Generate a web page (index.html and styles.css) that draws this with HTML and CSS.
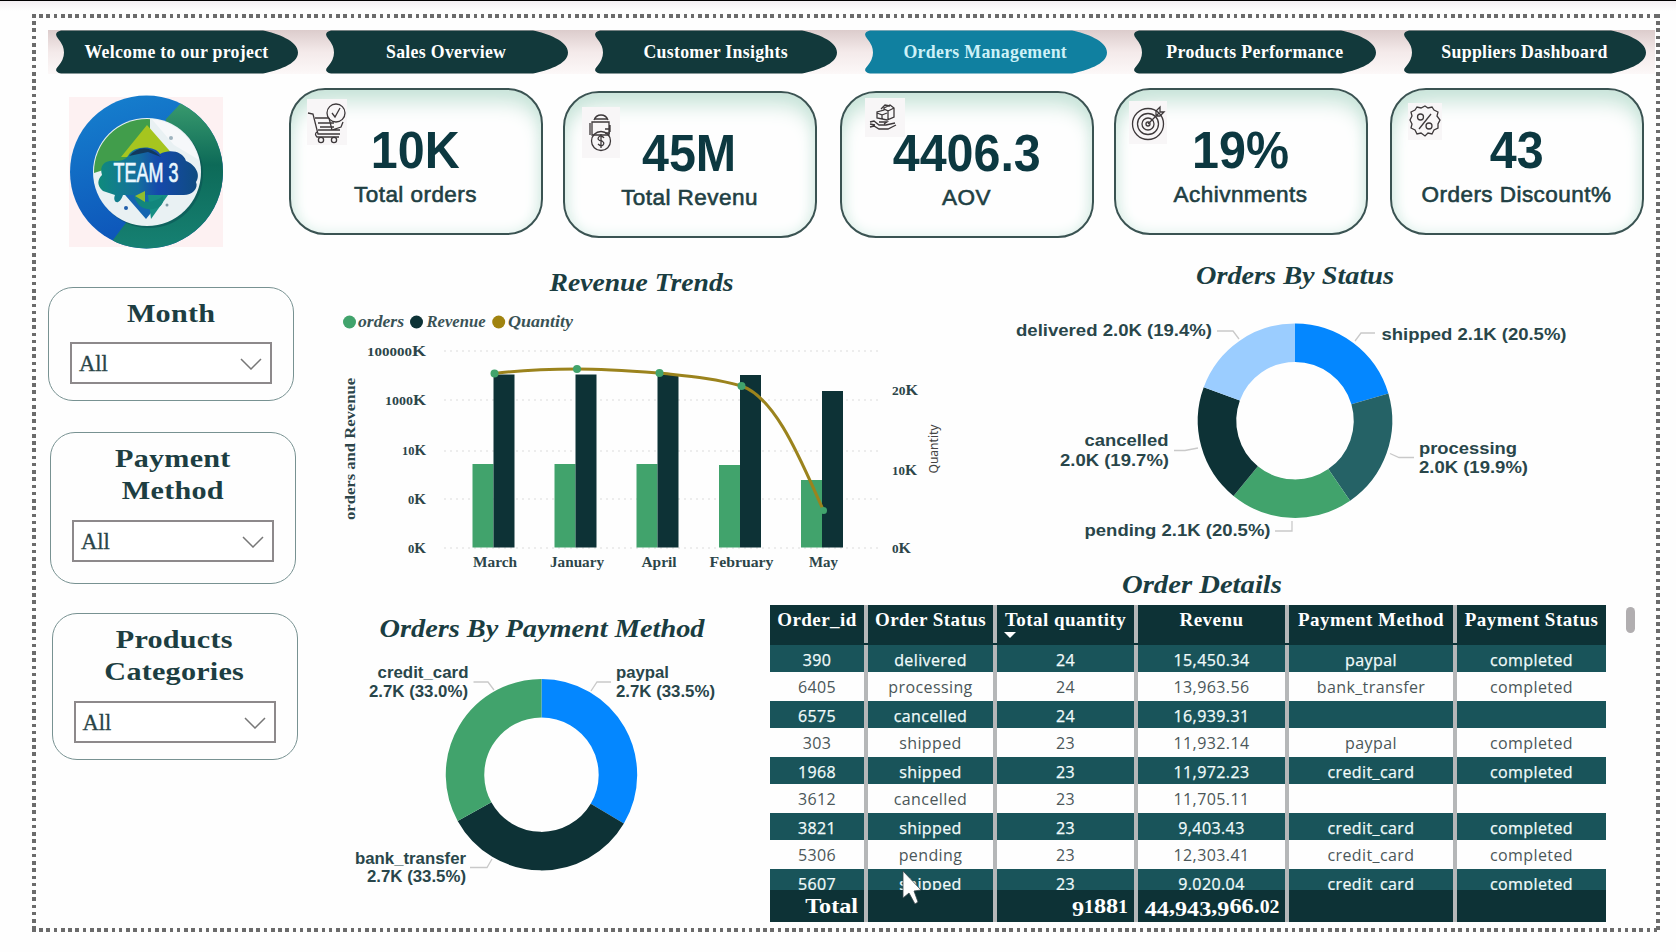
FILE: index.html
```html
<!DOCTYPE html>
<html lang="en">
<head>
<meta charset="utf-8">
<title>Orders Management</title>
<link rel="stylesheet" href="styles.css">
</head>
<body>
<div class="page">
  <nav class="nav">
    <a class="tab"><svg class="tab-shape" viewBox="0 0 242 43"><path d="M5 0H207C221 3 242 10 242 22S221 40 207 43H5Q-3 41 2 36Q14 22 2 8Q-3 2 5 0Z"/></svg><span>Welcome to our project</span></a>
    <a class="tab"><svg class="tab-shape" viewBox="0 0 242 43"><path d="M5 0H207C221 3 242 10 242 22S221 40 207 43H5Q-3 41 2 36Q14 22 2 8Q-3 2 5 0Z"/></svg><span>Sales Overview</span></a>
    <a class="tab"><svg class="tab-shape" viewBox="0 0 242 43"><path d="M5 0H207C221 3 242 10 242 22S221 40 207 43H5Q-3 41 2 36Q14 22 2 8Q-3 2 5 0Z"/></svg><span>Customer Insights</span></a>
    <a class="tab active"><svg class="tab-shape" viewBox="0 0 242 43"><path d="M5 0H207C221 3 242 10 242 22S221 40 207 43H5Q-3 41 2 36Q14 22 2 8Q-3 2 5 0Z"/></svg><span>Orders Management</span></a>
    <a class="tab"><svg class="tab-shape" viewBox="0 0 242 43"><path d="M5 0H207C221 3 242 10 242 22S221 40 207 43H5Q-3 41 2 36Q14 22 2 8Q-3 2 5 0Z"/></svg><span>Products Performance</span></a>
    <a class="tab"><svg class="tab-shape" viewBox="0 0 242 43"><path d="M5 0H207C221 3 242 10 242 22S221 40 207 43H5Q-3 41 2 36Q14 22 2 8Q-3 2 5 0Z"/></svg><span>Suppliers Dashboard</span></a>
  </nav>

  <header class="summary">
    <svg class="logo" viewBox="0 0 155 155">
      <defs>
        <linearGradient id="lb" x1="0" y1="0" x2="0.3" y2="1"><stop offset="0" stop-color="#1682cf"/><stop offset="1" stop-color="#0d53b8"/></linearGradient>
        <linearGradient id="lg" x1="0.5" y1="0" x2="0.5" y2="1"><stop offset="0" stop-color="#3ea070"/><stop offset="0.45" stop-color="#0d6a58"/><stop offset="1" stop-color="#168173"/></linearGradient>
        <linearGradient id="lt" x1="0" y1="0" x2="1" y2="0"><stop offset="0" stop-color="#0f8a7c"/><stop offset="0.4" stop-color="#146f9e"/><stop offset="0.6" stop-color="#1549ac"/><stop offset="1" stop-color="#0f4c80"/></linearGradient>
        <clipPath id="lc"><circle cx="77.500" cy="77" r="76.500"/></clipPath>
        <clipPath id="li"><ellipse cx="78" cy="77" rx="53" ry="53"/></clipPath>
      </defs>
      <rect y="2" width="154" height="150" fill="#fdf1f2"/>
      <g clip-path="url(#lc)"><rect width="155" height="155" fill="url(#lb)"/><path d="M112 8L97 24V80L56 129L44 145V155H155V0Z" fill="url(#lg)"/></g>
      <ellipse cx="80" cy="79" rx="54" ry="54" fill="#0a4b52" opacity=".5"/>
      <ellipse cx="78" cy="77" rx="54" ry="54" fill="#e9f1f3"/>
      <g clip-path="url(#li)"><path d="M20 20H81V60L25 78Z" fill="#419d4b"/><path d="M78 30L52 62H106Z" fill="#a6c51f"/><path d="M81 22L105 50L132 66V20Z" fill="#f6f8fa"/><path d="M50 93H102L77 124Z" fill="#1565b0"/><path d="M78 93H104L82 124Z" fill="#168f83"/></g>
      <path d="M34 96C27 90 29 84 33 80C30 70 36 65 46 66C52 66 56 65 59 61C64 50 86 50 91 59C100 54 114 56 117 66C127 70 132 80 127 87C130 94 122 101 113 100H54C50 112 43 107 46 100Z" fill="url(#lt)"/>
      <path d="M60 61Q75 45 92 62L79 57Z" fill="#12395c"/>
      <path d="M65 100Q78 113 94 101Q96 112 84 114Q69 116 65 100Z" fill="#12867c"/><path d="M66 101L76 96V107Z" fill="#8fbd2e"/>
      <circle cx="57" cy="113" r="2" fill="#225fac"/><circle cx="102" cy="43" r="2" fill="#9fb4be"/><circle cx="98" cy="110" r="1.500" fill="#7c9aa4"/>
      <text class="logo-text" x="77" y="87" text-anchor="middle" textLength="65" lengthAdjust="spacingAndGlyphs">TEAM 3</text>
    </svg>
    <section class="card">
      <svg class="icon cart" viewBox="0 0 40 46"><path d="M1 14L6 15L11 35H33M8 19H22M11 24H27M13 28H27M22 19L25 31L34 28L36 23M10 33Q7 35 10 38H32M11 31H33"/><circle cx="14" cy="41" r="2.600"/><circle cx="27" cy="41" r="2.600"/><circle cx="29" cy="14" r="9"/><path d="M25 14L28 18L33 9"/></svg>
      <strong>10K</strong><span>Total orders</span>
    </section>
    <section class="card low">
      <svg class="icon bag" viewBox="0 0 38 51"><path d="M12 13Q14 8 19 8T26 13M10 15H27V28H10ZM8 16V28M12 12H25M28 18V25M23 22H28M23 26H28"/><circle cx="19" cy="34" r="9.500"/><path d="M22 31Q21 29 18 29Q16 30 16 32Q17 34 20 34Q23 36 21 38Q19 40 16 37M19 27V41"/></svg>
      <strong>45M</strong><span>Total Revenu</span>
    </section>
    <section class="card low aov">
      <svg class="icon boxes" viewBox="0 0 40 39"><path d="M19 10L25 7L29 10V19L22 22L12 20V14L19 12ZM19 11L23 13V21M23 13L29 10M12 15L17 17V21M17 17L22 15M16 11L20 7L25 8M5 24L9 23L14 27H21L30 25M5 29L9 28L14 31H23L31 27M5 26L10 27M14 24H22L19 26"/></svg>
      <strong>4406.3</strong><span>AOV</span>
    </section>
    <section class="card">
      <svg class="icon target" viewBox="0 0 38 43"><circle cx="19" cy="23" r="15.500"/><circle cx="19" cy="23" r="10.500"/><circle cx="19" cy="23" r="6"/><circle cx="19" cy="23" r="2"/><path d="M19 23L30 12M27 15V10L31 6V11H35L31 15Z"/></svg>
      <strong>19%</strong><span>Achivnments</span>
    </section>
    <section class="card">
      <svg class="icon percent" viewBox="0 0 34 37"><path d="M17 3L20 5L24 4L26 7L30 9L29 13L32 17L30 21L30 25L26 27L24 31L20 30L17 33L13 30L9 31L7 27L3 25L4 21L2 17L4 13L3 9L7 7L9 4L13 5Z"/><circle cx="12.500" cy="14" r="3"/><circle cx="21" cy="23" r="3"/><path d="M23 11L11 26"/></svg>
      <strong>43</strong><span>Orders Discount%</span>
    </section>
  </header>

  <main class="content">
    <aside class="filters">
      <section class="filter month">
        <h2>Month</h2>
        <div class="select"><span>All</span><svg viewBox="0 0 22 12"><path d="M1 1L11 11L21 1"/></svg></div>
      </section>
      <section class="filter payment">
        <h2>Payment<br>Method</h2>
        <div class="select"><span>All</span><svg viewBox="0 0 22 12"><path d="M1 1L11 11L21 1"/></svg></div>
      </section>
      <section class="filter products">
        <h2>Products<br>Categories</h2>
        <div class="select"><span>All</span><svg viewBox="0 0 22 12"><path d="M1 1L11 11L21 1"/></svg></div>
      </section>
    </aside>

    <div class="visuals">
      <div class="row">
        <svg class="chart" width="630" height="322" viewBox="330 250 630 322">
          <text class="title" x="549.500" y="291" textLength="184" lengthAdjust="spacingAndGlyphs">Revenue Trends</text>
          <circle cx="349.500" cy="322" r="6.500" fill="#41a36c"/><text class="legend" x="358" y="327" textLength="46" lengthAdjust="spacingAndGlyphs">orders</text>
          <circle cx="416.500" cy="322" r="6.500" fill="#0d3236"/><text class="legend" x="426.500" y="327" textLength="59" lengthAdjust="spacingAndGlyphs">Revenue</text>
          <circle cx="498.700" cy="322" r="6.500" fill="#a0830f"/><text class="legend" x="508" y="327" textLength="65" lengthAdjust="spacingAndGlyphs">Quantity</text>
          <path class="grid" d="M444 351H878M444 400H878M444 451H878M444 499H878M444 548H878"/>
          <g class="axis">
            <text x="367" y="355.500" textLength="59" lengthAdjust="spacingAndGlyphs"><tspan class="small">100000</tspan>K</text>
            <text x="385" y="404.500" textLength="41" lengthAdjust="spacingAndGlyphs"><tspan class="small">1000</tspan>K</text>
            <text x="402" y="454.500" textLength="24" lengthAdjust="spacingAndGlyphs"><tspan class="small">10</tspan>K</text>
            <text x="408" y="503.500" textLength="18" lengthAdjust="spacingAndGlyphs"><tspan class="small">0</tspan>K</text>
            <text x="408" y="552.500" textLength="18" lengthAdjust="spacingAndGlyphs"><tspan class="small">0</tspan>K</text>
            <text x="892" y="395" textLength="26" lengthAdjust="spacingAndGlyphs"><tspan class="small">20</tspan>K</text>
            <text x="892" y="474.500" textLength="25" lengthAdjust="spacingAndGlyphs"><tspan class="small">10</tspan>K</text>
            <text x="892" y="552.500" textLength="19" lengthAdjust="spacingAndGlyphs"><tspan class="small">0</tspan>K</text>
            <text x="473" y="567" textLength="44" lengthAdjust="spacingAndGlyphs">March</text>
            <text x="550" y="567" textLength="54" lengthAdjust="spacingAndGlyphs">January</text>
            <text x="641.500" y="567" textLength="35" lengthAdjust="spacingAndGlyphs">April</text>
            <text x="709.500" y="567" textLength="64" lengthAdjust="spacingAndGlyphs">February</text>
            <text x="809" y="567" textLength="29" lengthAdjust="spacingAndGlyphs">May</text>
            <text transform="translate(354.500 520) rotate(-90)" textLength="142" lengthAdjust="spacingAndGlyphs">orders and Revenue</text>
          </g>
          <text class="quantity" transform="translate(938 473.500) rotate(-90)" textLength="49" lengthAdjust="spacingAndGlyphs">Quantity</text>
          <path fill="#41a36c" d="M472.500 464h21v83.500h-21ZM554.500 464h21v83.500h-21ZM636.500 464h21v83.500h-21ZM719 465h21v82.500h-21ZM801 480h21v67.500h-21Z"/>
          <path fill="#0d3236" d="M493.500 374.500h21v173h-21ZM575.500 374.500h21v173h-21ZM657.500 375h21v172.500h-21ZM740 375h21v172.500h-21ZM822 391h21v156.500h-21Z"/>
          <path class="line" d="M494.500 373.500C522 370 550 369 577 369C605 369 632 371 659.500 373C687 376 714 378 741.500 386C777 398 803 466 823.500 510.500"/>
          <g fill="#41a36c"><circle cx="494.500" cy="373.500" r="4"/><circle cx="577" cy="369" r="4"/><circle cx="659.500" cy="373" r="4"/><circle cx="741.500" cy="386" r="4"/><circle cx="823.500" cy="510.500" r="3.500"/></g>
        </svg>
        <svg class="chart" width="690" height="322" viewBox="960 250 690 322">
          <text class="title" x="1196" y="284" textLength="198" lengthAdjust="spacingAndGlyphs">Orders By Status</text>
          <g class="ring">
            <path stroke="#0487ff" d="M1295 342.700A78 78 0 0 1 1369.900 398.900"/>
            <path stroke="#256266" d="M1369.900 398.900A78 78 0 0 1 1339.200 484.900"/>
            <path stroke="#41a36c" d="M1339.200 484.900A78 78 0 0 1 1245.700 481.100"/>
            <path stroke="#0d3236" d="M1245.700 481.100A78 78 0 0 1 1221.800 393.800"/>
            <path stroke="#9bcdff" d="M1221.800 393.800A78 78 0 0 1 1295 342.700"/>
          </g>
          <path class="leader" d="M1217 331H1233L1239 339M1375 333H1361L1355 341M1414 457.500H1399L1390 453.500M1174 450.500H1185L1198 448M1275 531H1292V521"/>
          <g class="label">
            <text x="1016" y="336" textLength="196" lengthAdjust="spacingAndGlyphs">delivered 2.0K (19.4%)</text>
            <text x="1381.500" y="339.500" textLength="185" lengthAdjust="spacingAndGlyphs">shipped 2.1K (20.5%)</text>
            <text x="1419" y="453.500" textLength="98" lengthAdjust="spacingAndGlyphs">processing</text>
            <text x="1419" y="473" textLength="109" lengthAdjust="spacingAndGlyphs">2.0K (19.9%)</text>
            <text x="1084.500" y="445.500" textLength="84" lengthAdjust="spacingAndGlyphs">cancelled</text>
            <text x="1060" y="465.500" textLength="109" lengthAdjust="spacingAndGlyphs">2.0K (19.7%)</text>
            <text x="1084.500" y="536" textLength="186" lengthAdjust="spacingAndGlyphs">pending 2.1K (20.5%)</text>
          </g>
        </svg>
      </div>
      <div class="row">
        <svg class="chart" width="440" height="355" viewBox="330 572 440 355">
          <text class="title" x="379.500" y="636.500" textLength="325" lengthAdjust="spacingAndGlyphs">Orders By Payment Method</text>
          <g class="ring">
            <path stroke="#0487ff" d="M541.500 698.200A76.500 76.500 0 0 1 607.300 813.600"/>
            <path stroke="#0d3236" d="M607.300 813.600A76.500 76.500 0 0 1 474.500 811.600"/>
            <path stroke="#41a36c" d="M474.500 811.600A76.500 76.500 0 0 1 541.500 698.200"/>
          </g>
          <path class="leader" d="M473.500 682H488L494 690M611 682H597L591 691M470 867.500H487L492 859"/>
          <g class="label">
            <text x="377.500" y="677.500" textLength="91" lengthAdjust="spacingAndGlyphs">credit_card</text>
            <text x="369" y="697" textLength="99" lengthAdjust="spacingAndGlyphs">2.7K (33.0%)</text>
            <text x="616" y="677.500" textLength="53" lengthAdjust="spacingAndGlyphs">paypal</text>
            <text x="616" y="697" textLength="99" lengthAdjust="spacingAndGlyphs">2.7K (33.5%)</text>
            <text x="355" y="863.500" textLength="111" lengthAdjust="spacingAndGlyphs">bank_transfer</text>
            <text x="367" y="882" textLength="99" lengthAdjust="spacingAndGlyphs">2.7K (33.5%)</text>
          </g>
        </svg>
        <section class="details">
          <svg class="chart" width="836" height="33" viewBox="770 572 836 33"><text class="title" x="1122" y="592.500" textLength="160" lengthAdjust="spacingAndGlyphs">Order Details</text></svg>
          <div class="table-area">
            <div class="table">
              <div class="tr head"><div>Order_id</div><div>Order Status</div><div class="sorted">Total quantity<i class="caret"></i></div><div>Revenu</div><div>Payment Method</div><div>Payment Status</div></div>
              <div class="rows">
                <div class="tr"><div>390</div><div>delivered</div><div>24</div><div>15,450.34</div><div>paypal</div><div>completed</div></div>
                <div class="tr"><div>6405</div><div>processing</div><div>24</div><div>13,963.56</div><div>bank_transfer</div><div>completed</div></div>
                <div class="tr"><div>6575</div><div>cancelled</div><div>24</div><div>16,939.31</div><div></div><div></div></div>
                <div class="tr"><div>303</div><div>shipped</div><div>23</div><div>11,932.14</div><div>paypal</div><div>completed</div></div>
                <div class="tr"><div>1968</div><div>shipped</div><div>23</div><div>11,972.23</div><div>credit_card</div><div>completed</div></div>
                <div class="tr"><div>3612</div><div>cancelled</div><div>23</div><div>11,705.11</div><div></div><div></div></div>
                <div class="tr"><div>3821</div><div>shipped</div><div>23</div><div>9,403.43</div><div>credit_card</div><div>completed</div></div>
                <div class="tr"><div>5306</div><div>pending</div><div>23</div><div>12,303.41</div><div>credit_card</div><div>completed</div></div>
                <div class="tr"><div>5607</div><div>shipped</div><div>23</div><div>9,020.04</div><div>credit_card</div><div>completed</div></div>
              </div>
              <div class="tr total"><div><span>Total</span></div><div></div><div><span><b class="d">9</b><b class="x">1</b>88<b class="x">1</b></span></div><div><span><b class="d">44</b>,<b class="d">943</b>,<b class="d">9</b>66.<b class="x">02</b></span></div><div></div><div></div></div>
            </div>
            <div class="scroll-thumb"></div>
          </div>
        </section>
      </div>
    </div>
  </main>
  <svg class="cursor" viewBox="0 0 20 35"><path d="M1 1V28L7 23L13 34L16 32L12 21L19 20Z" fill="#fff" stroke="#39474b" stroke-width=".8"/></svg>
</div>
</body>
</html>
```
FILE: styles.css
```css
* { box-sizing: border-box; }
body { margin: 0; background: #fefefe; color: #143a3e; font-family: "Liberation Serif", serif; }
.page {
  position: relative; width: 1676px; height: 952px; overflow: hidden;
  border-top: 1px solid #000; padding: 29px 21px 0 48px;
  background:
    repeating-linear-gradient(90deg, #6b6b6b 0 3.6px, transparent 3.6px 7.24px) 32px 13px / 1628px 4px no-repeat,
    repeating-linear-gradient(90deg, #6b6b6b 0 3.6px, transparent 3.6px 7.24px) 32px 927px / 1628px 4px no-repeat,
    repeating-linear-gradient(180deg, #6b6b6b 0 3.6px, transparent 3.6px 7.24px) 32px 13px / 4px 918px no-repeat,
    repeating-linear-gradient(180deg, #6b6b6b 0 3.6px, transparent 3.6px 7.24px) 1656px 13px / 4px 918px no-repeat,
    linear-gradient(#f3eff3, #fefefe 10px);
}
.nav {
  display: flex; gap: 27.6px; height: 44px; padding-left: 8px;
  background: linear-gradient(#dccccc, #f4eaea 50%, #fcf8f8);
}
.tab {
  display: grid; width: 242px; flex: none; place-items: center; color: #fff;
  font-weight: bold; font-size: 17.8px; letter-spacing: .3px; white-space: nowrap;
}
.tab > * { grid-area: 1 / 1; }
.tab span { padding: 0 1px 0 0; }
.tab-shape { width: 242px; height: 44px; fill: #12393b; }
.active { color: #cdf1f7; }
.active .tab-shape { fill: #1080a0; }

.summary { display: flex; height: 176px; padding: 14px 0 0 21px; align-items: flex-start; }
.logo { width: 155px; height: 155px; margin: 7px 64.5px 0 0; flex: none; }
.logo-text { font: 27px "Liberation Sans", sans-serif; fill: #e9f7ff; stroke: #e9f7ff; stroke-width: .7px; }
.card {
  position: relative; display: flex; flex-direction: column; align-items: center;
  width: 254px; height: 147px; margin-right: 22px; padding-top: 31px; flex: none;
  border: 2.5px solid #3a5352; border-radius: 36px; background: #fefefe;
  box-shadow: inset 0 16px 20px -4px #c8e4d9, inset 0 0 14px #dcf0ea;
  font-family: "Liberation Sans", sans-serif;
}
.card.low { margin-top: 3px; margin-left: -2px; margin-right: 25px; }
.card.aov { margin-right: 20px; }
.card strong { font-size: 51.5px; line-height: 58px; color: #0c3840; transform: scaleX(.94); }
.card > span { margin-top: 3px; font-size: 22.5px; line-height: 26px; letter-spacing: .45px; color: #213f43; -webkit-text-stroke: .6px #213f43; }
.icon { position: absolute; fill: none; stroke: #3d383a; stroke-width: 1.3; background: #f8f6f7; }
.cart { left: 16px; top: 9px; width: 40px; height: 46px; }
.bag { left: 17px; top: 14px; width: 38px; height: 51px; }
.boxes { left: 23px; top: 5px; width: 40px; height: 39px; }
.target { left: 13px; top: 11px; width: 38px; height: 43px; }
.percent { left: 16px; top: 13px; width: 34px; height: 37px; }

.content { display: flex; }
.filters { width: 282px; padding-top: 36.5px; flex: none; }
.filter {
  width: 246px; border: 1.5px solid #789292; border-radius: 25px; text-align: center;
  display: flex; flex-direction: column; align-items: center; padding-top: 10px;
}
.filter h2 { margin: 0; font-size: 26px; line-height: 32.5px; letter-spacing: .2px; transform: scaleX(1.16); color: #1d3e42; }
.month { height: 114px; }
.payment { height: 152px; margin: 31px 0 0 2px; }
.products { height: 147px; margin: 29px 0 0 3.5px; }
.select {
  display: flex; align-items: center; justify-content: space-between; width: 202px; height: 42px;
  margin-top: 12px; padding: 2px 8px 0 7px; border: 2px solid #8d898b; background: #fff; font-size: 22.5px; color: #294447;
  -webkit-text-stroke: .3px #294447;
}
.select svg { width: 22px; height: 12px; fill: none; stroke: #777; stroke-width: 1.5; }
.row { display: flex; }
.chart { display: block; flex: none; }
.title { font: italic bold 26px "Liberation Serif", serif; fill: #1a3d41; }
.legend { font: italic bold 16px "Liberation Serif", serif; fill: #395255; }
.axis { font: bold 15px "Liberation Serif", serif; fill: #2c4549; }
.axis .small { font-size: 12.5px; }
.quantity { font: 13px "Noto Sans", sans-serif; fill: #444; }
.grid { stroke: #dcdcdc; stroke-width: 1; stroke-dasharray: 2 4; }
.line { fill: none; stroke: #9b831d; stroke-width: 3; }
.ring { fill: none; stroke-width: 38.5; }
.leader { fill: none; stroke: #c9c9c9; stroke-width: 1.3; }
.label { font: bold 17px "Liberation Sans", sans-serif; fill: #29464a; }

.table-area { display: flex; gap: 20px; }
.table { width: 836px; color: #fff; }
.tr { display: grid; grid-template-columns: 98px 129px 141px 151px 168px 149px; }
.tr > div { text-align: center; border-right: 4px solid #b5b7b8; white-space: nowrap; }
.tr > div:last-child { border-right: 0; }
.head { height: 40px; background: #0d3236; font-weight: bold; font-size: 19px; line-height: 29px; letter-spacing: .45px; }
.head > div { height: 38px; }
.sorted { position: relative; }
.caret { position: absolute; left: 7px; top: 27px; border: 6px solid transparent; border-top-color: #fff; border-bottom: 0; }
.rows { height: 245px; overflow: hidden; font: 16px/28px "Open Sans", sans-serif; letter-spacing: .4px; }
.rows .tr { height: 28px; color: #4b5759; }
.rows .tr > div { height: 28px; }
.rows .tr:nth-child(odd) { color: #f1fbfb; background: linear-gradient(#19545a 27px, #fefefe 27px); }
.rows .tr:nth-child(odd) > div { padding-top: 1px; -webkit-text-stroke: .25px #f1fbfb; }
.total { height: 32px; background: #0d3236; font-weight: bold; font-size: 22px; line-height: 32px; }
.total > div { height: 32px; text-align: right; padding-right: 6px; }
.total span { display: inline-block; transform: scaleX(1.1); transform-origin: right; }
.total b { display: inline-block; line-height: 1; }
.total .x { font-size: 18px; }
.total .d { transform: translateY(3px); }
.scroll-thumb { width: 9px; height: 26px; margin-top: 2px; border-radius: 5px; background: #b1aeb0; }
.cursor { position: absolute; left: 902px; top: 869px; width: 20px; height: 35px; }
```
